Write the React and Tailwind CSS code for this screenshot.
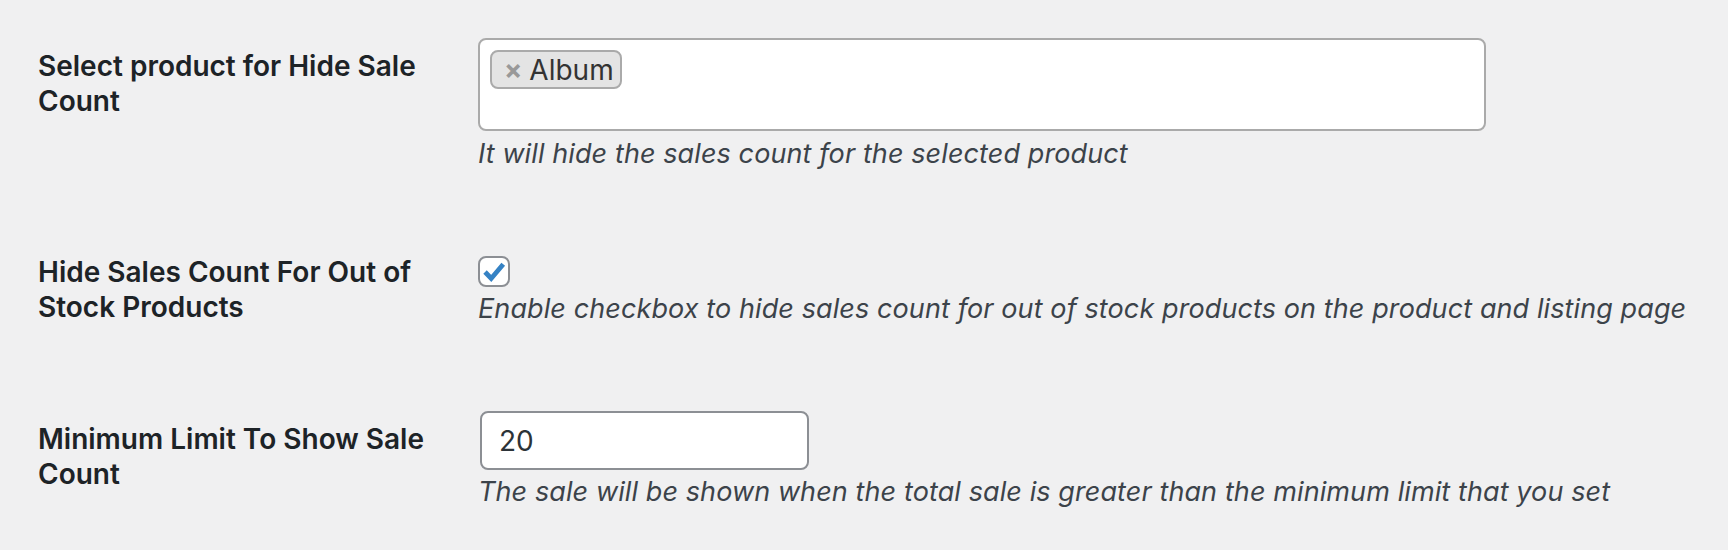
export default function App() {
  const font = { fontFamily: 'Inter, "Noto Sans", sans-serif' };
  return (
    <div className="min-h-[550px] w-full bg-[#f0f0f1] pt-[38px] text-[#1d2327]" style={font}>
      {/* Row 1 */}
      <div className="flex">
        <div className="w-[478px] shrink-0 pl-[38px] pt-[11px] text-[28px] font-semibold leading-[35px]">
          <span className="block whitespace-nowrap">Select product for Hide Sale</span>
          <span className="block whitespace-nowrap">Count</span>
        </div>
        <div className="flex-1">
          <div className="h-[93px] w-[1008px] rounded-[8px] border-2 border-[#aaaaaa] bg-white px-[10px] pt-[10px]">
            <span className="inline-flex h-[39px] items-center rounded-[8px] border-2 border-[#aaaaaa] bg-[#e4e4e4] pl-[12px] pr-[6px] text-[28px] leading-none text-[#333333]">
              <span className="mr-[7px] text-[27px] font-bold text-[#999999]">×</span>
              <span>Album</span>
            </span>
          </div>
          <p className="mt-[8px] text-[27px] italic leading-[30px] tracking-[0.1px] text-[#3c434a] whitespace-nowrap">
            It will hide the sales count for the selected product
          </p>
        </div>
      </div>

      {/* Row 2 */}
      <div className="mt-[85px] flex">
        <div className="w-[478px] shrink-0 pl-[38px] pt-[1px] text-[28px] font-semibold leading-[35px]">
          <span className="block whitespace-nowrap">Hide Sales Count For Out of</span>
          <span className="block whitespace-nowrap">Stock Products</span>
        </div>
        <div className="flex-1 pt-[2px]">
          <div className="flex h-[31px] w-[32px] items-center justify-center rounded-[8px] border-2 border-[#8c8f94] bg-white">
            <svg viewBox="0 0 20 20" className="h-[28px] w-[28px]">
              <path d="M3.6 10 L8 14.6 L16.6 4.4" fill="none" stroke="#3582c4" strokeWidth="3.4" strokeLinecap="butt" strokeLinejoin="miter" />
            </svg>
          </div>
          <p className="mt-[7px] text-[27px] italic leading-[30px] tracking-[0.1px] text-[#3c434a] whitespace-nowrap">
            Enable checkbox to hide sales count for out of stock products on the product and listing page
          </p>
        </div>
      </div>

      {/* Row 3 */}
      <div className="mt-[86px] flex">
        <div className="w-[478px] shrink-0 pl-[38px] pt-[11px] text-[28px] font-semibold leading-[35px]">
          <span className="block whitespace-nowrap">Minimum Limit To Show Sale</span>
          <span className="block whitespace-nowrap">Count</span>
        </div>
        <div className="flex-1 pl-[2px]">
          <div className="flex h-[59px] w-[329px] items-center rounded-[8px] border-2 border-[#8c8f94] bg-white pl-[17px] text-[28px] text-[#2c3338]">
            20
          </div>
          <p className="mt-[7px] -ml-[2px] text-[27px] italic leading-[30px] tracking-[0.1px] text-[#3c434a] whitespace-nowrap">
            The sale will be shown when the total sale is greater than the minimum limit that you set
          </p>
        </div>
      </div>
    </div>
  );
}
